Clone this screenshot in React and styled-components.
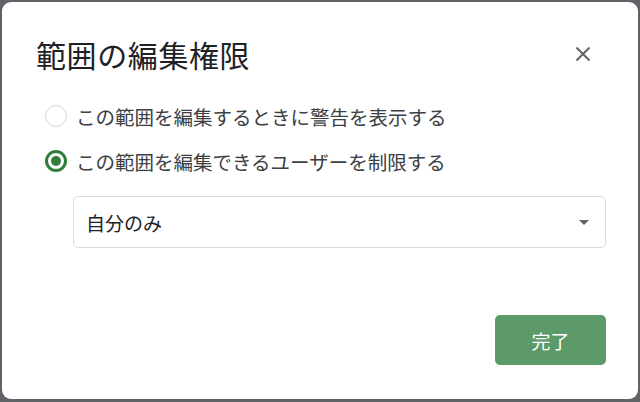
import React, { useState } from "react";
import styled, { createGlobalStyle } from "styled-components";

const GlobalStyle = createGlobalStyle`
    html, body {
        margin: 0;
        padding: 0;
        background: #5f6368;
    }
    body {
        font-family: "Noto Sans CJK JP", "Noto Sans", sans-serif;
    }
`;

const Backdrop = styled.div`
    width: 640px;
    height: 402px;
    padding: 2px 2px 3px 2px;
    box-sizing: border-box;
    background: #5f6368;
`;

const Dialog = styled.div`
    height: 100%;
    background: #fff;
    border-radius: 9px;
    display: flex;
    flex-direction: column;
    padding: 30px 32px 34px 34px;
    box-sizing: border-box;
`;

const Header = styled.div`
    display: flex;
    align-items: center;
    justify-content: space-between;
    height: 44px;
`;

const Title = styled.h1`
    margin: 0;
    font-size: 30px;
    font-weight: 400;
    color: #202124;
    letter-spacing: 0.6px;
`;

const CloseButton = styled.button`
    border: none;
    background: none;
    padding: 0;
    width: 24px;
    height: 24px;
    display: flex;
    align-items: center;
    justify-content: center;
    margin-right: 11px;
    cursor: pointer;
`;

const Options = styled.div`
    display: flex;
    flex-direction: column;
    gap: 21px;
    margin-top: 28px;
`;

const OptionRow = styled.label`
    display: flex;
    align-items: center;
    gap: 9px;
    font-size: 19.5px;
    color: #3c4043;
    height: 24px;
    cursor: pointer;
`;

const Radio = styled.span`
    width: 22px;
    height: 22px;
    box-sizing: border-box;
    border-radius: 50%;
    border: ${(p) => (p.$checked ? "3px solid #2f7d3a" : "1.5px solid #d4d6da")};
    display: flex;
    align-items: center;
    justify-content: center;
    margin-left: 9px;
    &::after {
        content: "";
        width: 10px;
        height: 10px;
        border-radius: 50%;
        background: #2f7d3a;
        display: ${(p) => (p.$checked ? "block" : "none")};
    }
`;

const Select = styled.div`
    margin: 23px 0 0 37px;
    height: 52px;
    border: 1px solid #dadce0;
    border-radius: 5px;
    box-sizing: border-box;
    display: flex;
    align-items: center;
    justify-content: space-between;
    padding: 0 16px 0 12px;
    font-size: 19px;
    color: #202124;
`;

const Caret = styled.span`
    width: 0;
    height: 0;
    border-left: 5px solid transparent;
    border-right: 5px solid transparent;
    border-top: 5px solid #5f6368;
`;

const Footer = styled.div`
    margin-top: auto;
    display: flex;
    justify-content: flex-end;
`;

const DoneButton = styled.button`
    width: 111px;
    height: 50px;
    border: none;
    border-radius: 5px;
    background: #5c9a69;
    color: #fff;
    font-family: inherit;
    font-size: 19px;
    cursor: pointer;
`;

const options = [
    "この範囲を編集するときに警告を表示する",
    "この範囲を編集できるユーザーを制限する",
];

const App = () => {
    const [selected, setSelected] = useState(1);

    return (
        <>
            <GlobalStyle />
            <Backdrop>
                <Dialog>
                    <Header>
                        <Title>範囲の編集権限</Title>
                        <CloseButton aria-label="閉じる">
                            <svg width="16" height="16" viewBox="0 0 16 16">
                                <path
                                    d="M1.5 1.5 L14.5 14.5 M14.5 1.5 L1.5 14.5"
                                    stroke="#5f6368"
                                    strokeWidth="2"
                                />
                            </svg>
                        </CloseButton>
                    </Header>
                    <Options>
                        {options.map((text, i) => (
                            <OptionRow key={i} onClick={() => setSelected(i)}>
                                <Radio $checked={selected === i} />
                                {text}
                            </OptionRow>
                        ))}
                    </Options>
                    <Select>
                        自分のみ
                        <Caret />
                    </Select>
                    <Footer>
                        <DoneButton>完了</DoneButton>
                    </Footer>
                </Dialog>
            </Backdrop>
        </>
    );
};

export default App;
